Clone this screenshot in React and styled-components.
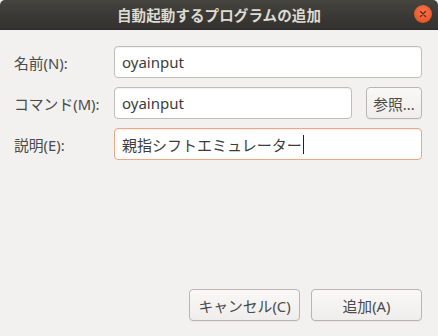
import React from 'react';
import styled, { createGlobalStyle } from 'styled-components';

const GlobalStyle = createGlobalStyle`
  html, body {
    margin: 0;
    padding: 0;
    background: #f2f1f0;
  }
  body {
    font-family: "Noto Sans", "Noto Sans CJK JP", sans-serif;
  }
`;

const Window = styled.div`
  width: 438px;
  height: 336px;
  display: flex;
  flex-direction: column;
  background: #f2f1f0;
  overflow: hidden;
`;

const TitleBar = styled.header`
  position: relative;
  height: 29px;
  flex-shrink: 0;
  display: flex;
  align-items: center;
  justify-content: center;
  background: linear-gradient(180deg, #45443f 0%, #3a3935 55%, #33322e 100%);
  border-bottom: 1px solid #2b2a27;
  border-radius: 5px 5px 0 0;
  color: #dfdbd2;
  font-family: "Noto Sans CJK JP", sans-serif;
  font-size: 14.5px;
  font-weight: 700;
  letter-spacing: 0.1px;
`;

const CloseButton = styled.div`
  position: absolute;
  right: 6px;
  top: 5px;
  width: 18px;
  height: 18px;
  border-radius: 50%;
  background: radial-gradient(circle at 50% 40%, #f47a4c 0%, #e8562a 70%, #c9441d 100%);
  display: flex;
  align-items: center;
  justify-content: center;
`;

const Body = styled.main`
  flex: 1;
  display: flex;
  flex-direction: column;
  padding: 16px 16px 15px 14px;
`;

const Form = styled.div`
  display: grid;
  grid-template-columns: 100px 1fr auto;
  row-gap: 9px;
  align-items: center;
`;

const Label = styled.label`
  font-size: 14.8px;
  color: #4a4a48;
  white-space: nowrap;
`;

const Field = styled.div`
  grid-column: ${({ $span }) => ($span ? '2 / 4' : '2 / 3')};
  height: 30px;
  display: flex;
  align-items: center;
  padding: 0 6px 0 7px;
  background: #ffffff;
  border: 1px solid ${({ $focused }) => ($focused ? '#f0a585' : '#bfbdb9')};
  border-radius: 4px;
  box-shadow: inset 0 1px 1px rgba(0, 0, 0, 0.06);
  font-size: 15px;
  color: #3c3c3c;
  white-space: nowrap;
`;

const Caret = styled.span`
  display: inline-block;
  width: 1px;
  height: 19px;
  margin-left: 1px;
  background: #222;
`;

const Button = styled.button`
  height: ${({ $h }) => $h || 32}px;
  width: ${({ $w }) => $w}px;
  padding: 0;
  border: 1px solid #b9b6b1;
  border-radius: 4px;
  background: linear-gradient(180deg, #f9f8f7 0%, #efeeec 100%);
  box-shadow: 0 1px 0 rgba(0, 0, 0, 0.04);
  font-family: "Noto Sans", "Noto Sans CJK JP", sans-serif;
  font-size: 14.8px;
  color: #4a4a48;
`;

const BrowseButton = styled(Button)`
  grid-column: 3 / 4;
  margin-left: 14px;
`;

const Actions = styled.div`
  margin-top: auto;
  display: flex;
  justify-content: flex-end;
  gap: 11px;
`;

export default function App() {
  return (
    <>
      <GlobalStyle />
      <Window>
        <TitleBar>
          自動起動するプログラムの追加
          <CloseButton>
            <svg width="8" height="8" viewBox="0 0 8 8">
              <path d="M1.5 1.5L6.5 6.5M6.5 1.5L1.5 6.5" stroke="#6b2410" strokeWidth="1.4" strokeLinecap="round" />
            </svg>
          </CloseButton>
        </TitleBar>
        <Body>
          <Form>
            <Label>名前(N):</Label>
            <Field $span>oyainput</Field>
            <Label>コマンド(M):</Label>
            <Field>oyainput</Field>
            <BrowseButton $w={56}>参照...</BrowseButton>
            <Label>説明(E):</Label>
            <Field $span $focused>
              親指シフトエミュレーター<Caret />
            </Field>
          </Form>
          <Actions>
            <Button $w={111}>キャンセル(C)</Button>
            <Button $w={111}>追加(A)</Button>
          </Actions>
        </Body>
      </Window>
    </>
  );
}
